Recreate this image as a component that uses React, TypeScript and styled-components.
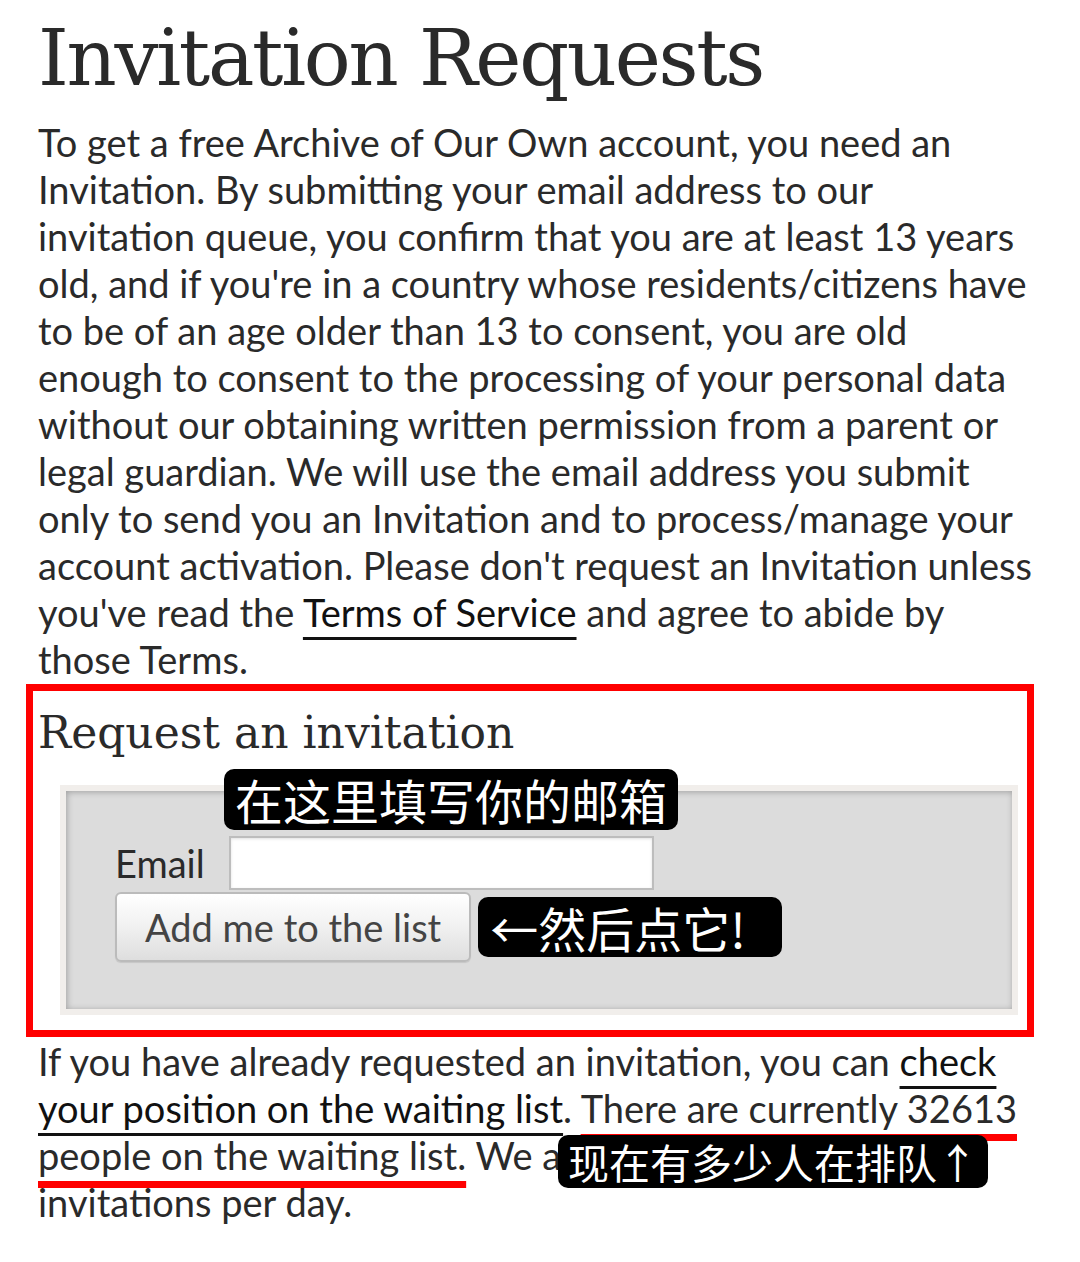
import React from "react";
import styled, { createGlobalStyle } from "styled-components";

const GlobalStyle = createGlobalStyle`
  html, body {
    margin: 0;
    padding: 0;
    background: #ffffff;
  }
  body {
    font-family: Lato, "Noto Sans", "Noto Sans CJK SC", sans-serif;
    color: #2a2a2a;
  }
`;

const Page = styled.main`
  width: 1080px;
  box-sizing: border-box;
  padding: 0 38px 0 38px;
`;

const Title = styled.h1`
  margin: 0;
  padding-top: 12px;
  font-family: "DejaVu Serif", serif;
  font-weight: 400;
  font-size: 78px;
  letter-spacing: -2.3px;
  line-height: 92px;
  color: #2a2a2a;
`;

const Paragraph = styled.p`
  position: relative;
  margin: 0;
  font-size: 38px;
  line-height: 47px;
  color: #2a2a2a;
  white-space: nowrap;
`;

const Intro = styled(Paragraph)`
  margin-top: 15px;
`;

const Link = styled.a`
  color: #111111;
  text-decoration: underline;
  text-decoration-thickness: 3px;
  text-underline-offset: 10px;
`;

const Highlight = styled.span`
  text-decoration: underline;
  text-decoration-color: #ff0000;
  text-decoration-thickness: 7px;
  text-underline-offset: 11px;
  text-decoration-skip-ink: none;
`;

const FormSection = styled.section`
  margin: 1px 8px 1px -12px;
  border: 7px solid #ff0000;
  padding: 16px 0 15px 5px;
`;

const SubTitle = styled.h2`
  margin: 0 0 27px 0;
  font-family: "DejaVu Serif", serif;
  font-weight: 400;
  font-size: 44px;
  line-height: 51px;
  color: #2a2a2a;
`;

const Fieldset = styled.div`
  position: relative;
  margin: 0 9px 0 22px;
  border: 6px solid #f1eeeb;
  background: #dcdcdc;
  box-shadow: inset 1px 1px 6px rgba(0, 0, 0, 0.28);
  padding: 45px 0 47px 49px;
  display: flex;
  flex-direction: column;
  gap: 2px;
`;

const Row = styled.div`
  display: flex;
  align-items: center;
`;

const Label = styled.label`
  font-size: 38px;
  line-height: 54px;
  color: #2a2a2a;
  margin-right: 24px;
`;

const EmailInput = styled.input`
  box-sizing: border-box;
  width: 425px;
  height: 54px;
  border: 2px solid #bdbdbd;
  background: #ffffff;
  box-shadow: inset 0 1px 3px rgba(0, 0, 0, 0.12);
  margin: 0;
  padding: 0 8px;
  font-size: 30px;
`;

const Button = styled.button`
  box-sizing: border-box;
  height: 70px;
  padding: 0 28px;
  border: 2px solid #bbbbbb;
  border-radius: 6px;
  background: linear-gradient(#ffffff 0%, #f2f2f2 45%, #dedede 100%);
  box-shadow: 0 1px 1px rgba(0, 0, 0, 0.1);
  font-family: Lato, "Noto Sans", sans-serif;
  font-size: 38px;
  color: #444444;
  cursor: pointer;
`;

const Note = styled.span`
  display: inline-block;
  box-sizing: border-box;
  background: #000000;
  color: #ffffff;
  border-radius: 10px;
  font-family: "Noto Sans CJK SC", sans-serif;
  white-space: nowrap;
`;

const NoteTop = styled(Note)`
  position: absolute;
  left: 158px;
  top: -22px;
  height: 61px;
  padding: 0 11px;
  font-size: 48px;
  line-height: 61px;
`;

const NoteInline = styled(Note)`
  margin-left: 7px;
  width: 304px;
  height: 60px;
  padding: 0 12px;
  font-size: 48px;
  line-height: 60px;
`;

const NoteQueue = styled(Note)`
  position: absolute;
  left: 520px;
  top: 97px;
  height: 53px;
  padding: 0 10px;
  font-size: 41px;
  line-height: 53px;
`;

export default function App() {
  return (
    <>
      <GlobalStyle />
      <Page>
        <Title>Invitation Requests</Title>
        <Intro>
          To get a free Archive of Our Own account, you need an
          <br />
          Invitation. By submitting your email address to our
          <br />
          invitation queue, you confirm that you are at least 13 years
          <br />
          old, and if you're in a country whose residents/citizens have
          <br />
          to be of an age older than 13 to consent, you are old
          <br />
          enough to consent to the processing of your personal data
          <br />
          without our obtaining written permission from a parent or
          <br />
          legal guardian. We will use the email address you submit
          <br />
          only to send you an Invitation and to process/manage your
          <br />
          account activation. Please don't request an Invitation unless
          <br />
          you've read the <Link href="#tos">Terms of Service</Link> and agree
          to abide by
          <br />
          those Terms.
        </Intro>
        <FormSection>
          <SubTitle>Request an invitation</SubTitle>
          <Fieldset>
            <NoteTop>在这里填写你的邮箱</NoteTop>
            <Row>
              <Label htmlFor="invite-email">Email</Label>
              <EmailInput id="invite-email" type="email" />
            </Row>
            <Row>
              <Button type="button">Add me to the list</Button>
              <NoteInline>←然后点它!</NoteInline>
            </Row>
          </Fieldset>
        </FormSection>
        <Paragraph>
          If you have already requested an invitation, you can{" "}
          <Link href="#status">
            check
            <br />
            your position on the waiting list
          </Link>
          .{" "}
          <Highlight>
            There are currently 32613
            <br />
            people on the waiting list.
          </Highlight>{" "}
          We are sending out 1000
          <br />
          invitations per day.
          <NoteQueue>现在有多少人在排队↑</NoteQueue>
        </Paragraph>
      </Page>
    </>
  );
}
